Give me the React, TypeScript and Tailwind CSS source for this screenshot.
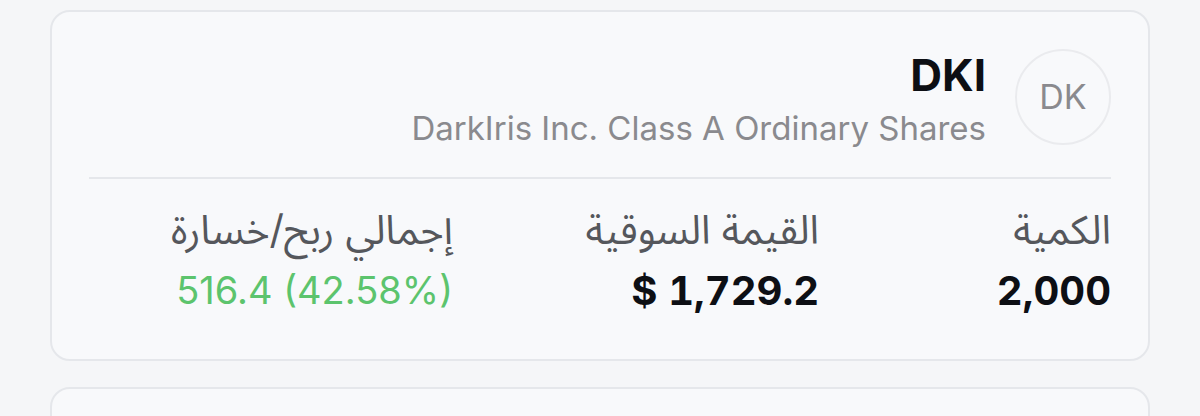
import React from "react";

export default function App() {
  return (
    <div
      dir="rtl"
      className="min-h-screen bg-[#f5f6f8] px-[50px] pt-[10px] pb-[40px] font-['Inter','Noto_Sans_Arabic','DejaVu_Sans',sans-serif]"
    >
      <div className="rounded-[20px] border-2 border-[#e5e7eb] bg-[#f8f9fb] px-[37px] pt-[37px] pb-[44px]">
        <div className="flex items-start gap-[29px]">
          <div className="flex h-[96px] w-[96px] shrink-0 items-center justify-center rounded-full border-2 border-[#eaebee]">
            <span className="text-[34px] leading-none text-[#8a8a8e]">DK</span>
          </div>
          <div className="flex flex-col items-start">
            <div className="text-[44px] font-bold leading-[1.2] text-[#0d0f14]">DKI</div>
            <div className="mt-[7px] text-[33px] leading-[1.2] text-[#8a8a8e]">
              DarkIris Inc. Class A Ordinary Shares
            </div>
          </div>
        </div>
        <div className="mt-[29px] h-[2px] bg-[#e5e7eb]" />
        <div className="mt-[29px] flex">
          <div className="w-[292px] shrink-0">
            <div className="text-[40px] leading-[1.1] text-[#55575c]">الكمية</div>
            <div className="mt-[15px] text-[40px] font-bold leading-[1.2] text-[#0d0f14] tabular-nums">
              <span dir="ltr">2,000</span>
            </div>
          </div>
          <div className="w-[366px] shrink-0">
            <div className="text-[40px] leading-[1.1] text-[#55575c]">القيمة السوقية</div>
            <div className="mt-[15px] text-[40px] font-bold leading-[1.2] text-[#0d0f14] tabular-nums">
              <span dir="ltr">$ 1,729.2</span>
            </div>
          </div>
          <div className="flex-1">
            <div className="text-[40px] leading-[1.1] text-[#55575c]">إجمالي ربح/خسارة</div>
            <div className="mt-[15px] text-[38px] leading-[1.25] text-[#5cc46d]">
              <span dir="ltr">516.4 (42.58%)</span>
            </div>
          </div>
        </div>
      </div>
      <div className="mt-[26px] h-[120px] rounded-[20px] border-2 border-[#e5e7eb] bg-[#f8f9fb]" />
    </div>
  );
}
